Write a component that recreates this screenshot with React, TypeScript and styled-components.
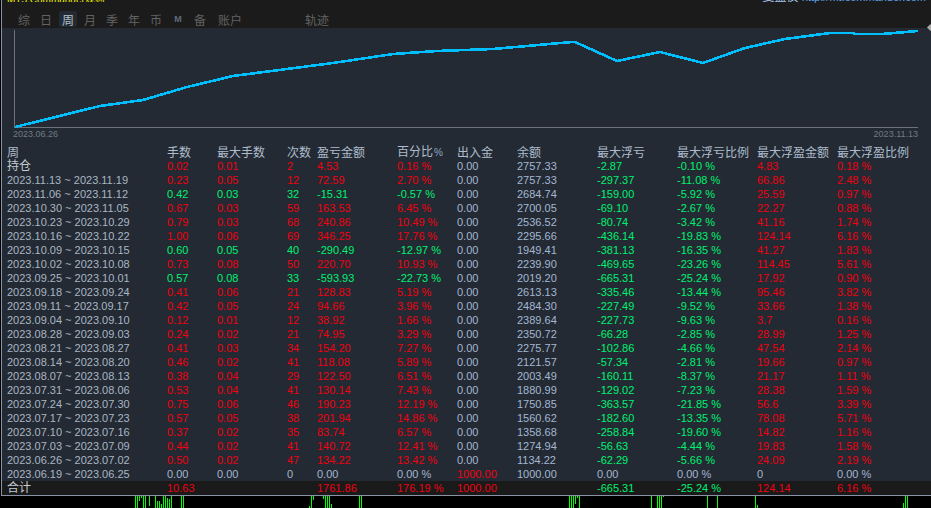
import styled, { createGlobalStyle } from "styled-components";

type Tone = "up" | "down" | "flat";

const tabs = ["综", "日", "周", "月", "季", "年", "币", "M", "备"];

const headers = [
  "周",
  "手数",
  "最大手数",
  "次数",
  "盈亏金额",
  "百分比",
  "出入金",
  "余额",
  "最大浮亏",
  "最大浮亏比例",
  "最大浮盈金额",
  "最大浮盈比例",
];

const rows = [
  "持仓|0.02|0.01|2|4.53|0.16 %|0.00|2757.33|-2.87|-0.10 %|4.83|0.18 %",
  "2023.11.13 ~ 2023.11.19|0.23|0.05|12|72.59|2.70 %|0.00|2757.33|-297.37|-11.08 %|66.86|2.48 %",
  "2023.11.06 ~ 2023.11.12|0.42|0.03|32|-15.31|-0.57 %|0.00|2684.74|-159.00|-5.92 %|25.59|0.97 %",
  "2023.10.30 ~ 2023.11.05|0.67|0.03|59|163.53|6.45 %|0.00|2700.05|-69.10|-2.67 %|22.27|0.88 %",
  "2023.10.23 ~ 2023.10.29|0.79|0.03|68|240.86|10.49 %|0.00|2536.52|-80.74|-3.42 %|41.16|1.74 %",
  "2023.10.16 ~ 2023.10.22|1.00|0.06|69|346.25|17.76 %|0.00|2295.66|-436.14|-19.83 %|124.14|6.16 %",
  "2023.10.09 ~ 2023.10.15|0.60|0.05|40|-290.49|-12.97 %|0.00|1949.41|-381.13|-16.35 %|41.27|1.83 %",
  "2023.10.02 ~ 2023.10.08|0.73|0.08|50|220.70|10.93 %|0.00|2239.90|-469.65|-23.26 %|114.45|5.61 %",
  "2023.09.25 ~ 2023.10.01|0.57|0.08|33|-593.93|-22.73 %|0.00|2019.20|-665.31|-25.24 %|17.92|0.90 %",
  "2023.09.18 ~ 2023.09.24|0.41|0.06|21|128.83|5.19 %|0.00|2613.13|-335.46|-13.44 %|95.46|3.82 %",
  "2023.09.11 ~ 2023.09.17|0.42|0.05|24|94.66|3.96 %|0.00|2484.30|-227.49|-9.52 %|33.66|1.38 %",
  "2023.09.04 ~ 2023.09.10|0.12|0.01|12|38.92|1.66 %|0.00|2389.64|-227.73|-9.63 %|3.7|0.16 %",
  "2023.08.28 ~ 2023.09.03|0.24|0.02|21|74.95|3.29 %|0.00|2350.72|-66.28|-2.85 %|28.99|1.25 %",
  "2023.08.21 ~ 2023.08.27|0.41|0.03|34|154.20|7.27 %|0.00|2275.77|-102.86|-4.66 %|47.54|2.14 %",
  "2023.08.14 ~ 2023.08.20|0.46|0.02|41|118.08|5.89 %|0.00|2121.57|-57.34|-2.81 %|19.66|0.97 %",
  "2023.08.07 ~ 2023.08.13|0.38|0.04|29|122.50|6.51 %|0.00|2003.49|-160.11|-8.37 %|21.17|1.11 %",
  "2023.07.31 ~ 2023.08.06|0.53|0.04|41|130.14|7.43 %|0.00|1880.99|-129.02|-7.23 %|28.38|1.59 %",
  "2023.07.24 ~ 2023.07.30|0.75|0.06|46|190.23|12.19 %|0.00|1750.85|-363.57|-21.85 %|56.6|3.39 %",
  "2023.07.17 ~ 2023.07.23|0.57|0.05|38|201.94|14.86 %|0.00|1560.62|-182.60|-13.35 %|78.08|5.71 %",
  "2023.07.10 ~ 2023.07.16|0.37|0.02|35|83.74|6.57 %|0.00|1358.68|-258.84|-19.60 %|14.82|1.16 %",
  "2023.07.03 ~ 2023.07.09|0.44|0.02|41|140.72|12.41 %|0.00|1274.94|-56.63|-4.44 %|19.83|1.58 %",
  "2023.06.26 ~ 2023.07.02|0.50|0.02|47|134.22|13.42 %|0.00|1134.22|-62.29|-5.66 %|24.09|2.19 %",
  "2023.06.19 ~ 2023.06.25|0.00|0.00|0|0.00|0.00 %|1000.00|1000.00|0.00|0.00 %|0|0.00 %",
].map((r) => r.split("|"));

const totals = ["合计", "10.63", "", "", "1761.86", "176.19 %", "1000.00", "", "-665.31", "-25.24 %", "124.14", "6.16 %"];

const curve =
  "15,127 100,106 143,100 187,87 233,76 287,69 333,63 393,54 437,51 465,50 493,49 572,42 575,42 617,61 660,52 703,63 745,48 785,39 830,33 853,33 855,34 882,34 918,31";

// x, top offset in the strip (0 = full height)
const ticks: [number, number, number?][] = [
  [135, 0], [137, 0], [139, 0, 5], [141, 0, 2], [143, 0], [145, 0], [149, 0, 10], [155, 0], [157, 5], [159, 5],
  [161, 8], [163, 0], [165, 0], [167, 2], [169, 3], [171, 0], [181, 0], [183, 0], [309, 10], [311, 0],
  [313, 0, 4], [323, 0, 3], [325, 0], [327, 0], [329, 0], [331, 8], [359, 0], [361, 0], [569, 0], [571, 0],
  [573, 0], [575, 0, 8], [577, 0, 2], [579, 0], [651, 0], [657, 0], [659, 0], [661, 0], [663, 0, 1], [707, 0],
  [717, 0], [755, 0], [757, 9], [903, 7], [905, 0], [907, 0],
];

const toneOf = (value: string): Tone => {
  const n = parseFloat(value);
  if (n > 0) return "up";
  if (n < 0) return "down";
  return "flat";
};

const cellTone = (row: string[], col: number): Tone => {
  if (col === 0 || col === 7) return "flat";
  if (col < 4) return toneOf(row[4]);
  return toneOf(row[col]);
};

const App = () => {
  return (
    <>
      <GlobalStyle />
      <Frame>
        <TopBar>
          <Titles>
            <SiteTitle>MT5.Commander规则</SiteTitle>
            <LinkTitle>
              复盘仪 <span>http://mt.commander.com</span>
            </LinkTitle>
          </Titles>
          <Tabs>
            {tabs.map((t) => (
              <Tab key={t} active={t === "周"} small={t === "M"}>
                {t}
              </Tab>
            ))}
            <WideTab>账户</WideTab>
            <TrackTab>轨迹</TrackTab>
          </Tabs>
        </TopBar>
        <ChartPanel>
          <Knob />
          <Chart width="929" height="100" viewBox="2 28 929 100" shapeRendering="crispEdges">
            <line x1="14.5" y1="30" x2="14.5" y2="128" stroke="#6d7278" />
            <line x1="14" y1="127.5" x2="918" y2="127.5" stroke="#6d7278" />
            <polyline points={curve} fill="none" stroke="#00bfff" strokeWidth="2.6" />
          </Chart>
          <AxisDates>
            <span>2023.06.26</span>
            <span>2023.11.13</span>
          </AxisDates>
        </ChartPanel>
        <Table>
          <HeaderRow>
            {headers.map((h) => (
              <HeaderCell key={h}>
                {h}
                {h === "百分比" && <Unit>%</Unit>}
              </HeaderCell>
            ))}
          </HeaderRow>
          {rows.map((row) => (
            <Row key={row[0]}>
              {row.map((v, i) =>
                i === 0 ? (
                  <Period key={i} cjk={v === "持仓"}>
                    {v}
                  </Period>
                ) : (
                  <Cell key={i} tone={cellTone(row, i)}>
                    {v}
                  </Cell>
                )
              )}
            </Row>
          ))}
          <TotalRow>
            {totals.map((v, i) =>
              i === 0 ? (
                <Period key={i} cjk>
                  {v}
                </Period>
              ) : (
                <Cell key={i} tone={cellTone(totals, i)}>
                  {v}
                </Cell>
              )
            )}
          </TotalRow>
        </Table>
      </Frame>
      <TickStrip width="931" height="13" viewBox="0 0 931 13" shapeRendering="crispEdges">
        {ticks.map(([x, top, len]) => (
          <line key={x} x1={x + 0.5} x2={x + 0.5} y1={top} y2={len ? top + len : 13} stroke="#00ff00" />
        ))}
      </TickStrip>
    </>
  );
};

const GlobalStyle = createGlobalStyle`
  html, body {
    margin: 0;
    background: #000;
    overflow: hidden;
  }
  body {
    width: 931px;
    height: 508px;
    font-family: "Liberation Sans", "Noto Sans CJK SC", sans-serif;
  }
`;

const Frame = styled.div`
  margin-left: 1px;
  height: 495px;
  border-left: 1px solid #8993a5;
  border-bottom: 1px solid #8993a5;
  box-sizing: content-box;
  background: #232a33;
  display: flex;
  flex-direction: column;
`;

const TopBar = styled.div`
  height: 28px;
  background: #1b1b1b;
`;

const Titles = styled.div`
  height: 4px;
  overflow: hidden;
  display: flex;
  align-items: flex-end;
  justify-content: space-between;
  padding: 0 5px;
  font-size: 12px;
  line-height: 14px;
`;

const SiteTitle = styled.div`
  color: #f2f200;
  white-space: nowrap;
  font-size: 10px;
  line-height: 5px;
  height: 2px;
  overflow: hidden;
  display: flex;
  align-items: flex-end;
  margin-bottom: 2px;
`;

const LinkTitle = styled.div`
  color: #a8c8ee;
  white-space: nowrap;

  span {
    color: #5fa8f0;
    font-size: 11px;
  }
`;

const Tabs = styled.div`
  display: flex;
  align-items: center;
  height: 18px;
  margin-top: 6px;
  padding-left: 16px;
  gap: 10px;
`;

const Tab = styled.div<{ active?: boolean; small?: boolean }>`
  width: 12px;
  height: 16px;
  display: flex;
  align-items: center;
  justify-content: center;
  font-size: ${(p) => (p.small ? "9px" : "12px")};
  font-weight: ${(p) => (p.small ? 700 : 400)};
  color: ${(p) => (p.active ? "#b4c0ce" : p.small ? "#5e6a78" : "#626262")};
  border-radius: 2px;
  ${(p) =>
    p.active &&
    `
    background: #232a33;
    box-shadow: 3px 0 0 #232a33, -3px 0 0 #232a33;
  `}
`;

const WideTab = styled(Tab)`
  width: 24px;
  margin-left: 2px;
`;

const TrackTab = styled(Tab)`
  width: 24px;
  margin-left: 53px;
`;

const ChartPanel = styled.div`
  position: relative;
  height: 117px;
`;

const Knob = styled.div`
  position: absolute;
  right: -2px;
  top: -3px;
  width: 5px;
  height: 5px;
  background: #a9a9a9;
  transform: rotate(45deg);
`;

const Chart = styled.svg`
  display: block;
`;

const AxisDates = styled.div`
  display: flex;
  justify-content: space-between;
  padding: 0 13px 0 11px;
  font-size: 9px;
  line-height: 12px;
  color: #717a85;
`;

const Table = styled.div`
  flex: 1;
  display: flex;
  flex-direction: column;
`;

const Row = styled.div`
  height: 14px;
  display: grid;
  grid-template-columns: 160px 50px 70px 30px 80px 60px 60px 80px 80px 80px 80px 1fr;
  padding-left: 5px;
  align-items: center;
  font-size: 11px;
  line-height: 14px;
  white-space: nowrap;
`;

const HeaderRow = styled(Row)`
  font-size: 12px;
`;

const TotalRow = styled(Row)`
  background: #1a1a1a;
`;

const HeaderCell = styled.div`
  color: #aebccd;
`;

const Unit = styled.span`
  font-size: 10px;
  color: #8fa6c4;
  margin-left: 1px;
`;

const Period = styled.div<{ cjk?: boolean }>`
  color: ${(p) => (p.cjk ? "#c4cbd3" : "#aab6c4")};
  font-size: ${(p) => (p.cjk ? "12px" : "11px")};
`;

const toneColors: Record<Tone, string> = {
  up: "#f00010",
  down: "#00f070",
  flat: "#a3b7d2",
};

const Cell = styled.div<{ tone: Tone }>`
  color: ${(p) => toneColors[p.tone]};
`;

const TickStrip = styled.svg`
  display: block;
`;

export default App;
